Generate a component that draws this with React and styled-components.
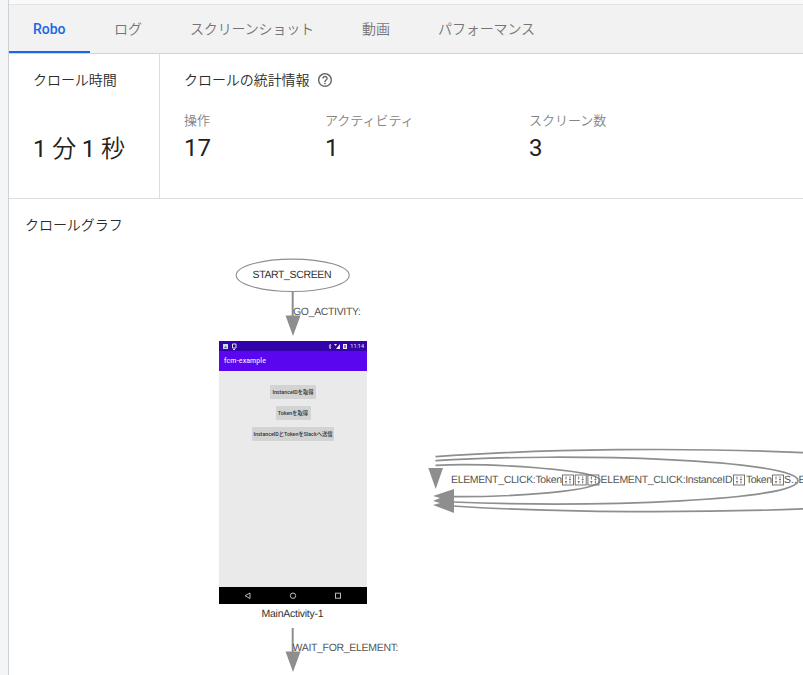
import React from "react";
import styled, { createGlobalStyle } from "styled-components";

const GlobalStyle = createGlobalStyle`
  * { box-sizing: border-box; }
  body {
    margin: 0;
    overflow: hidden;
    background: #f4f5f7;
    font-family: Roboto, "Noto Sans CJK JP", sans-serif;
    color: #212121;
  }
`;

const Page = styled.div`
  height: 675px;
  padding-left: 8px;
  overflow: hidden;
`;

const Card = styled.main`
  display: flex;
  flex-direction: column;
  height: 100%;
  background: #fff;
  border-left: 1px solid #cfd1d4;
`;

const TopStrip = styled.div`
  flex: none;
  height: 5px;
  background: #fafafa;
  border-bottom: 1px solid #e4e4e4;
`;

const TabBar = styled.nav`
  display: flex;
  flex: none;
  height: 49px;
  background: #f2f2f2;
  border-bottom: 1px solid #d3d3d3;
`;

const Tab = styled.div`
  width: ${(p) => p.$width}px;
  height: 48px;
  padding-left: 24px;
  line-height: 48px;
  font-size: 14px;
  letter-spacing: ${(p) => p.$spacing || 0}px;
  white-space: nowrap;
  font-weight: ${(p) => (p.$active ? 500 : 350)};
  color: ${(p) => (p.$active ? "#1967e6" : "#757575")};
  border-bottom: 2px solid ${(p) => (p.$active ? "#1967e6" : "transparent")};
`;

const Summary = styled.section`
  display: flex;
  flex: none;
  height: 145px;
  border-bottom: 1px solid #dedede;
`;

const TimePanel = styled.div`
  width: 151px;
  padding: 16px 0 0 24px;
  border-right: 1px solid #dedede;
`;

const StatsPanel = styled.div`
  flex: 1;
  padding: 16px 0 0 24px;
`;

const Heading = styled.h2`
  display: flex;
  align-items: center;
  gap: 9px;
  margin: 0;
  height: 20px;
  font-size: 14px;
  font-weight: 350;
  line-height: 19px;
  letter-spacing: -0.06px;
  color: #2c2c2c;
  white-space: nowrap;
`;

const Duration = styled.div`
  margin-top: 43px;
  font-size: 24px;
  font-weight: 350;
  letter-spacing: -0.1px;
  line-height: 32px;
  white-space: pre;
`;

const Digit = styled.span`
  font-weight: 400;
`;

const StatRow = styled.div`
  display: flex;
  margin-top: 22px;
`;

const Stat = styled.div`
  width: ${(p) => p.$width}px;
`;

const StatLabel = styled.div`
  height: 18px;
  line-height: 18px;
  font-size: 13px;
  font-weight: 350;
  color: #858585;
  white-space: nowrap;
`;

const StatValue = styled.div`
  height: 32px;
  margin-top: 2px;
  line-height: 32px;
  font-size: 24px;
`;

const GraphHeading = styled(Heading)`
  flex: none;
  margin: 16px 0 0 16px;
`;

const GraphCanvas = styled.section`
  position: relative;
  flex: none;
  height: 440px;
  overflow: hidden;
`;

const Edges = styled.svg`
  display: block;
  width: 794px;
  height: 440px;
  font-family: "Liberation Sans", Arial, sans-serif;
  font-size: 10.5px;
  text-rendering: geometricPrecision;
`;

const PhoneNode = styled.div`
  position: absolute;
  left: 210px;
  top: 106px;
  width: 148px;
  height: 263px;
  display: flex;
  flex-direction: column;
  background: #eaeaea;
  font-family: Roboto, "Noto Sans CJK JP", sans-serif;
`;

const StatusBar = styled.div`
  display: flex;
  align-items: center;
  justify-content: space-between;
  height: 10px;
  padding: 0 3px 0 4px;
  background: #3302a9;
  color: #eee;
  font-size: 5.5px;
`;

const StatusGroup = styled.div`
  display: flex;
  align-items: center;
  gap: 2px;
`;

const AppBar = styled.div`
  height: 20px;
  padding-left: 5px;
  line-height: 20px;
  background: #5a06ee;
  color: #e8ddff;
  font-size: 7px;
  letter-spacing: 0.08px;
  font-weight: 500;
`;

const ButtonList = styled.div`
  display: flex;
  flex: 1;
  flex-direction: column;
  align-items: center;
  gap: 7px;
  padding-top: 14px;
`;

const PhoneButton = styled.div`
  width: ${(p) => p.$width}px;
  height: 14px;
  border-radius: 1px;
  background: #d2d4d3;
  color: #333;
  font-size: 5.3px;
  font-weight: 500;
  line-height: 14px;
  text-align: center;
  white-space: nowrap;
`;

const NavBar = styled.div`
  height: 17px;
  background: #000;
`;

const tabs = [
  { label: "Robo", width: 81, active: true },
  { label: "ログ", width: 76 },
  { label: "スクリーンショット", width: 172, spacing: -0.15 },
  { label: "動画", width: 76 },
  { label: "パフォーマンス", width: 150, spacing: -0.1 },
];

const stats = [
  { label: "操作", value: "17", width: 141 },
  { label: "アクティビティ", value: "1", width: 204 },
  { label: "スクリーン数", value: "3", width: 100 },
];

function HelpIcon() {
  return (
    <svg width="14" height="14" viewBox="2 2 20 20" fill="#666">
      <path d="M11 18h2v-2h-2v2zm1-16C6.480 2 2 6.480 2 12s4.480 10 10 10 10-4.480 10-10S17.520 2 12 2zm0 18c-4.410 0-8-3.590-8-8s3.590-8 8-8 8 3.590 8 8-3.590 8-8 8zm0-14c-2.210 0-4 1.790-4 4h2c0-1.100.9-2 2-2s2 .9 2 2c0 2-3 1.750-3 5h2c0-2.250 3-2.500 3-5 0-2.210-1.790-4-4-4z" />
    </svg>
  );
}

function MissingGlyph({ x }) {
  return (
    <g transform={`translate(${x} 474.5)`} stroke="#666" strokeWidth="0.9" fill="none">
      <rect x="0.5" y="0.5" width="11" height="10" />
      <path d="M4 2v3M3 7h2M4 7v2M8 2v2M7 5h2M8 6v3" />
    </g>
  );
}

function GraphEdges() {
  return (
    <Edges viewBox="9 235 794 440">
      <g fill="none" stroke="#8e8e8e" strokeWidth="1.7">
        <ellipse cx="292.700" cy="275.300" rx="56.500" ry="16.200" strokeWidth="1.100" />
        <path d="M292.700 291.500V316M292.700 628V652" strokeWidth="2" />
        <path d="M435.500 465.300C485 463 600 469 600 480.500C600 491.500 510 497 453 496.700" />
        <path d="M435.500 460.700C570 452 798 460 798 480.500C798 500 600 508 453 502" />
        <path d="M435.500 456.700C540 449 690 447 810 453" />
        <path d="M453 506C560 513 700 513 810 508.700" />
      </g>
      <g fill="#8e8e8e">
        <path d="M285.500 315.500H300.500L293 336zM285.500 651.500H300.500L293 672zM428.300 468H443L435.700 489z" />
        <path d="M454 489L433 496L440 498L433 501L440 503L433 505L454 513z" />
      </g>
      <g fill="#555">
        <text x="252.500" y="277.700" textLength="79" fill="#333">START_SCREEN</text>
        <text x="293" y="315" textLength="68">GO_ACTIVITY:</text>
        <text x="261.500" y="617.200" textLength="62" fill="#333">MainActivity-1</text>
        <text x="292.500" y="651.200" textLength="106">WAIT_FOR_ELEMENT:</text>
        <text x="451" y="483.300" textLength="111">ELEMENT_CLICK:Token</text>
        <text x="600.500" y="483.300" textLength="132">ELEMENT_CLICK:InstanceID</text>
        <text x="746" y="483.300" textLength="26">Token</text>
        <text x="784" y="483.300">S..</text>
        <text x="798.500" y="483.300">E</text>
      </g>
      <MissingGlyph x={562} />
      <MissingGlyph x={574.7} />
      <MissingGlyph x={587.4} />
      <MissingGlyph x={733} />
      <MissingGlyph x={772} />
    </Edges>
  );
}

function PhoneScreen() {
  return (
    <PhoneNode>
      <StatusBar>
        <svg width="15" height="7" viewBox="0 0 15 7">
          <rect y="1" width="5" height="5" fill="#c5d8ef" />
          <path d="M1 5l1.500-2L4 5z" fill="#3973bd" />
          <path d="M9.500 1h3.500v4h-3.500zM10 6.500h2" fill="none" stroke="#ddd" />
        </svg>
        <StatusGroup>
          <svg width="20" height="7" viewBox="0 0 20 7" fill="#eee">
            <path d="M1 2l2 3-1 1V1l1 1-2 3" fill="none" stroke="#ddd" strokeWidth=".6" />
            <path d="M6 1h3L7.500 3zM8 6l4-5v5zM15 1h4v5h-4z" />
            <path d="M17 2v3" stroke="#3302a9" />
          </svg>
          <span>11:14</span>
        </StatusGroup>
      </StatusBar>
      <AppBar>fcm-example</AppBar>
      <ButtonList>
        <PhoneButton $width={46}>InstanceIDを取得</PhoneButton>
        <PhoneButton $width={35}>Tokenを取得</PhoneButton>
        <PhoneButton $width={82}>InstanceIDとTokenをSlackへ送信</PhoneButton>
      </ButtonList>
      <NavBar>
        <svg width="148" height="17" viewBox="0 0 148 17" fill="none" stroke="#bbb">
          <path d="M31 6v5.500L26 8.700z" />
          <circle cx="74" cy="8.700" r="2.700" />
          <rect x="116.500" y="6.200" width="5" height="5" />
        </svg>
      </NavBar>
    </PhoneNode>
  );
}

export default function App() {
  return (
    <Page lang="ja">
      <GlobalStyle />
      <Card>
        <TopStrip />
        <TabBar>
          {tabs.map((t) => (
            <Tab key={t.label} $width={t.width} $active={t.active} $spacing={t.spacing}>
              {t.label}
            </Tab>
          ))}
        </TabBar>
        <Summary>
          <TimePanel>
            <Heading>クロール時間</Heading>
            <Duration>
              <Digit>1</Digit> 分 <Digit>1</Digit> 秒
            </Duration>
          </TimePanel>
          <StatsPanel>
            <Heading>
              クロールの統計情報
              <HelpIcon />
            </Heading>
            <StatRow>
              {stats.map((s) => (
                <Stat key={s.label} $width={s.width}>
                  <StatLabel>{s.label}</StatLabel>
                  <StatValue>{s.value}</StatValue>
                </Stat>
              ))}
            </StatRow>
          </StatsPanel>
        </Summary>
        <GraphHeading>クロールグラフ</GraphHeading>
        <GraphCanvas>
          <GraphEdges />
          <PhoneScreen />
        </GraphCanvas>
      </Card>
    </Page>
  );
}
